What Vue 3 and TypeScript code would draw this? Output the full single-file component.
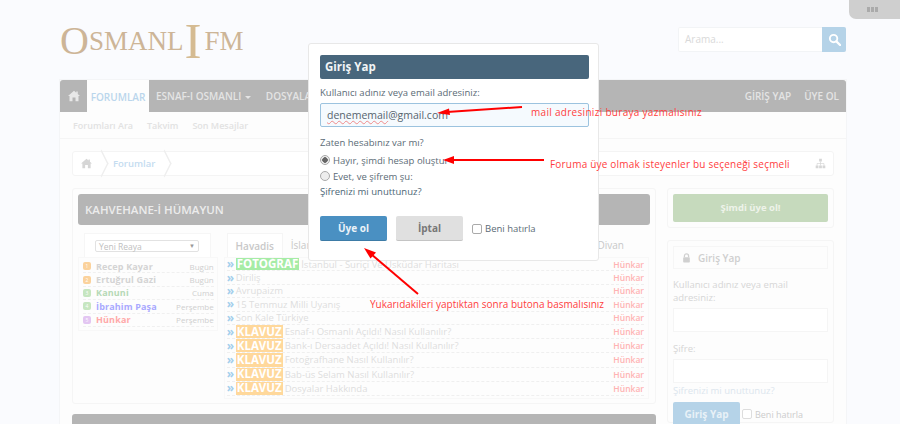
<script setup lang="ts">
const members = [
  { name: 'Recep Kayar', day: 'Bugün', color: '#d4d4d4', dot: '#fbd29c' },
  { name: 'Ertuğrul Gazi', day: 'Bugün', color: '#d4d4d4', dot: '#fbd29c' },
  { name: 'Kanuni', day: 'Cuma', color: '#b6d9b6', dot: '#c6e6c0' },
  { name: 'İbrahim Paşa', day: 'Perşembe', color: '#a9a9ff', dot: '#c6e6c0' },
  { name: 'Hünkar', day: 'Perşembe', color: '#ffa9a9', dot: '#e3c6f2' },
]

const topics = [
  { tag: 'FOTOĞRAF', title: 'İstanbul - Suriçi Ve Üsküdar Haritası' },
  { tag: '', title: 'Diriliş' },
  { tag: '', title: 'Avrupaizm' },
  { tag: '', title: '15 Temmuz Milli Uyanış' },
  { tag: '', title: 'Son Kale Türkiye' },
  { tag: 'KLAVUZ', title: 'Esnaf-ı Osmanlı Açıldı! Nasıl Kullanılır?' },
  { tag: 'KLAVUZ', title: 'Bank-ı Dersaadet Açıldı! Nasıl Kullanılır?' },
  { tag: 'KLAVUZ', title: 'Fotoğrafhane Nasıl Kullanılır?' },
  { tag: 'KLAVUZ', title: 'Bab-üs Selam Nasıl Kullanılır?' },
  { tag: 'KLAVUZ', title: 'Dosyalar Hakkında' },
]

const homePath = 'M8 1 0 8h2v7h4v-5h4v5h4V8h2L13 5.300V2h-2v1.500z'
</script>

<template>
  <div class="page">
    <div class="tab-handle"><i></i><i></i><i></i></div>

    <header class="top">
      <div class="logo">
        <span class="logo-o">O</span><span>SMANL</span><span class="logo-i">I</span><span>FM</span>
      </div>
      <div class="search">
        <span class="search-input">Arama...</span>
        <span class="search-btn">
          <svg width="13" height="13" viewBox="0 0 14 14">
            <circle cx="6" cy="6" r="4" fill="none" stroke="#fff" stroke-width="2" />
            <path d="M9 9l4 4" stroke="#fff" stroke-width="2.400" stroke-linecap="round" />
          </svg>
        </span>
      </div>
    </header>

    <div class="site">
      <nav class="nav">
        <span class="nav-home">
          <svg width="12" height="12" viewBox="0 0 16 16"><path :d="homePath" fill="#e8e8e8" /></svg>
        </span>
        <span class="nav-active">FORUMLAR</span>
        <span class="nav-link">ESNAF-I OSMANLI <b class="caret"></b></span>
        <span class="nav-link">DOSYALAR <b class="caret"></b></span>
        <span class="nav-right">GİRİŞ YAP</span>
        <span class="nav-right last">ÜYE OL</span>
      </nav>
      <div class="subnav">
        <span>Forumları Ara</span>
        <span>Takvim</span>
        <span>Son Mesajlar</span>
      </div>

      <div class="content">
        <div class="crumbs">
          <svg width="11" height="11" viewBox="0 0 16 16"><path :d="homePath" fill="#d6d6d6" /></svg>
          <span class="crumb-sep"></span>
          <span class="crumb-text">Forumlar</span>
          <span class="crumb-sep"></span>
          <svg class="sitemap" width="11" height="11" viewBox="0 0 16 16">
            <path d="M6 1h4v4H6zM1 11h4v4H1zM6 11h4v4H6zM11 11h4v4h-4z" fill="#d6d6d6" />
            <path d="M8 5v6M3 11V8h10v3" fill="none" stroke="#d6d6d6" />
          </svg>
        </div>

        <div class="columns">
          <main class="main">
            <section class="panel">
              <h2 class="panel-title">KAHVEHANE-İ HÜMAYUN</h2>
              <div class="panel-body">
                <div class="members">
                  <div class="select-tab">
                    <div class="select">Yeni Reaya <em>▼</em></div>
                  </div>
                  <ul class="member-list">
                    <li v-for="(m, index) in members" :key="m.name">
                      <i :style="{ background: m.dot }">{{ index + 1 }}</i>
                      <b :style="{ color: m.color }">{{ m.name }}</b>
                      <span>{{ m.day }}</span>
                    </li>
                  </ul>
                </div>
                <div class="topics">
                  <div class="tabs">
                    <span class="tab">Havadis</span>
                    <span class="tab-plain">İslam</span>
                    <span class="tab-end">Divan</span>
                  </div>
                  <ul class="topic-list">
                    <li v-for="(t, index) in topics" :key="t.title" :class="{ tall: index > 4 }">
                      <span class="mark">»</span>
                      <span v-if="t.tag" class="tag" :class="t.tag === 'KLAVUZ' ? 'orange' : 'green'">{{ t.tag }}</span>
                      <span class="topic-title">{{ t.title }}</span>
                      <span class="author">Hünkar</span>
                    </li>
                  </ul>
                </div>
              </div>
            </section>
            <div class="next-bar"></div>
          </main>

          <aside class="side">
            <div class="side-box">
              <div class="signup">Şimdi üye ol!</div>
            </div>
            <div class="side-box login">
              <div class="login-title">
                <svg width="9" height="10" viewBox="0 0 10 12">
                  <path d="M2.500 5V3.500a2.500 2.500 0 015 0V5" fill="none" stroke="#d0d0d0" stroke-width="1.500" />
                  <rect x="1" y="5" width="8" height="6.500" rx="1" fill="#d0d0d0" />
                </svg>
                Giriş Yap
              </div>
              <div class="login-label">Kullanıcı adınız veya email adresiniz:</div>
              <div class="login-input"></div>
              <div class="login-label pw">Şifre:</div>
              <div class="login-input"></div>
              <div class="login-forgot">Şifrenizi mi unuttunuz?</div>
              <div class="login-actions">
                <span class="login-btn">Giriş Yap</span>
                <span class="check faded"></span>
                <span class="login-remember">Beni hatırla</span>
              </div>
            </div>
          </aside>
        </div>
      </div>
    </div>

    <div class="modal">
      <h3 class="modal-title">Giriş Yap</h3>
      <div class="modal-label">Kullanıcı adınız veya email adresiniz:</div>
      <div class="modal-input"><span class="squiggle">denememail</span>@gmail.com</div>
      <div class="modal-q">Zaten hesabınız var mı?</div>
      <div class="radio-row"><span class="radio on"></span>Hayır, şimdi hesap oluştur</div>
      <div class="radio-row"><span class="radio"></span>Evet, ve şifrem şu:</div>
      <div class="modal-forgot">Şifrenizi mi unuttunuz?</div>
      <div class="modal-actions">
        <span class="btn primary">Üye ol</span>
        <span class="btn cancel">İptal</span>
        <span class="check"></span>
        <span>Beni hatırla</span>
      </div>
    </div>

    <svg class="arrows" width="900" height="424" viewBox="0 0 900 424">
      <path d="M522 107 447 112" stroke="#f00" stroke-width="2" />
      <path d="M437 113 449 108.500 450 115z" fill="#f00" />
      <path d="M544 160H452" stroke="#f00" stroke-width="2" />
      <path d="M443 160 454 156V164z" fill="#f00" />
      <path d="M418 294 371 254" stroke="#f00" stroke-width="2" />
      <path d="M364 248 376 252.500 370.500 258.500z" fill="#f00" />
    </svg>
    <span class="note note-mail">mail adresinizi buraya yazmalısınız</span>
    <span class="note note-radio">Foruma üye olmak isteyenler bu seçeneği seçmeli</span>
    <span class="note note-btn">Yukarıdakileri yaptıktan sonra butona basmalısınız</span>
  </div>
</template>

<style>
html,
body {
  margin: 0;
  overflow: hidden;
  background: #fafbfe;
}
</style>

<style scoped>
.page {
  position: relative;
  width: 900px;
  height: 424px;
  overflow: hidden;
  padding: 0 54px 0 60px;
  box-sizing: border-box;
  background: #fafbfe;
  font-family: "Open Sans", "Liberation Sans", sans-serif;
  font-size: 10px;
  color: #ddd;
}

ul {
  list-style: none;
  margin: 0;
  padding: 0;
}

.tab-handle {
  position: absolute;
  top: 0;
  right: 0;
  width: 51px;
  height: 19px;
  display: flex;
  justify-content: center;
  align-items: center;
  gap: 1px;
  padding-right: 5px;
  box-sizing: border-box;
  background: #cfcfcf;
  border-bottom-left-radius: 7px;
}

.tab-handle i {
  width: 3px;
  height: 5px;
  background: #aaa;
}

.top {
  height: 80px;
  display: flex;
  justify-content: space-between;
}

.logo {
  margin-top: 21px;
  height: 40px;
  display: flex;
  align-items: center;
  font-family: "Liberation Serif", serif;
  font-size: 27px;
  line-height: 40px;
  color: #cdb597;
  white-space: nowrap;
}

.logo-o {
  font-size: 40px;
}

.logo-i {
  font-size: 51px;
  margin: 0 3px 0 1px;
  color: #d5bb92;
}

.search {
  margin-top: 27px;
  width: 168px;
  height: 25px;
  display: flex;
  background: #fff;
  border-radius: 2px;
  box-shadow: inset 0 0 0 1px #f2f4f6;
}

.search-input {
  flex: 1;
  padding-left: 7px;
  font-size: 10px;
  line-height: 25px;
  color: #d9d9d9;
}

.search-btn {
  width: 24px;
  display: flex;
  align-items: center;
  justify-content: center;
  background: #b5d3e8;
  border-radius: 0 2px 2px 0;
}

.site {
  background: #fdfdfd;
  height: 344px;
  box-shadow: 0 0 0 1px #f4f5f7;
}

.nav {
  height: 32px;
  display: flex;
  align-items: center;
  background: #b5b5b5;
  border-radius: 3px 3px 0 0;
  font-size: 10px;
  font-weight: 600;
  color: #e4e4e4;
}

.nav-home {
  width: 27px;
  display: flex;
  justify-content: center;
}

.nav-active {
  width: 62px;
  height: 32px;
  line-height: 34px;
  text-align: center;
  background: #fdfdfd;
  color: #bad6ec;
}

.nav-link {
  margin-left: 7px;
  margin-right: 8px;
  white-space: nowrap;
}

.caret {
  display: inline-block;
  vertical-align: middle;
  border: 3px solid transparent;
  border-top-color: #e4e4e4;
  border-bottom: 0;
  margin-left: 1px;
}

.nav-right {
  margin-left: 13px;
}

.nav-right:nth-of-type(5) {
  margin-left: auto;
}

.nav-right.last {
  margin-right: 7px;
}

.subnav {
  height: 27px;
  display: flex;
  align-items: center;
  gap: 14px;
  padding-left: 13px;
  border-bottom: 1px solid #f5f5f5;
  box-sizing: border-box;
  font-size: 9px;
  font-weight: 600;
  color: #e2e2e2;
}

.content {
  padding: 12px 12px 0;
}

.crumbs {
  height: 25px;
  display: flex;
  align-items: center;
  padding: 0 7px 0 8px;
  background: #fff;
  border: 1px solid #f4f4f4;
  border-radius: 3px;
  box-sizing: border-box;
  font-size: 9.500px;
  font-weight: 600;
  color: #c4dcf0;
}

.crumb-sep {
  width: 8px;
  height: 8px;
  margin: 0 8px 0 5px;
  border-top: 1px solid #eee;
  border-right: 1px solid #eee;
  transform: scaleX(0.5) rotate(45deg) scale(2.200);
}

.crumb-text {
  margin-left: -1px;
}

.sitemap {
  margin-left: auto;
}

.columns {
  display: flex;
  margin-top: 12px;
  gap: 11px;
}

.main {
  width: 584px;
}

.panel {
  height: 216px;
  padding: 6px;
  box-sizing: border-box;
  background: #fdfdfd;
  border: 1px solid #f5f5f5;
  border-radius: 3px;
}

.panel-title {
  margin: -1px -1px 0;
  height: 31px;
  padding-left: 7px;
  background: #b5b5b5;
  border-radius: 3px;
  font-size: 11.500px;
  font-weight: 600;
  line-height: 31px;
  color: #ececec;
}

.panel-body {
  display: flex;
  padding-top: 8px;
}

.members {
  width: 140px;
  margin-left: -1px;
}

.select-tab {
  width: 127px;
  height: 24px;
  margin-left: 6px;
  padding-top: 6px;
  box-sizing: border-box;
  border: 1px solid #f6f6f6;
  border-bottom: 0;
  background: #fff;
}

.select {
  width: 104px;
  height: 12px;
  margin-left: 10px;
  padding: 0 3px;
  box-sizing: border-box;
  display: flex;
  justify-content: space-between;
  background: #fff;
  border: 1px solid #e2e2e2;
  border-radius: 2px;
  font-size: 8.500px;
  line-height: 11px;
  color: #c0c0c0;
}

.select em {
  font-style: normal;
  font-size: 6px;
  color: #999;
}

.member-list {
  padding: 2px 3px 3px 4px;
  border: 1px solid #f8f8f8;
}

.member-list li {
  height: 13.400px;
  display: flex;
  align-items: center;
  box-sizing: border-box;
  border-bottom: 1px dashed #f0f0f0;
  font-size: 9px;
}

.member-list i {
  width: 8px;
  height: 8px;
  margin-right: 5px;
  border-radius: 2px;
  font-size: 5px;
  font-style: normal;
  line-height: 8px;
  text-align: center;
  color: #fff;
}

.member-list b {
  font-weight: 700;
  letter-spacing: 0.150px;
}

.member-list span {
  margin-left: auto;
  font-size: 8px;
  color: #cfcfcf;
}

.topics {
  width: 426px;
  margin-left: 6px;
}

.tabs {
  height: 24px;
  display: flex;
  align-items: center;
  font-size: 10px;
  font-weight: 600;
  color: #c8c8c8;
}

.tab {
  width: 56px;
  height: 24px;
  line-height: 24px;
  text-align: center;
  margin-left: 3px;
  background: #fff;
  border: 1px solid #f5f5f5;
  border-bottom: 0;
  box-sizing: border-box;
}

.tab-plain {
  margin-left: 8px;
  font-weight: 400;
}

.tab-end {
  margin-left: auto;
  margin-right: 25px;
  font-weight: 400;
}

.topic-list {
  padding: 0 4px 2px 2px;
  border: 1px solid #f8f8f8;
}

.topic-list li {
  height: 13.400px;
  display: flex;
  align-items: center;
  box-sizing: border-box;
  border-bottom: 1px dashed #efefef;
  font-size: 9.500px;
  white-space: nowrap;
  overflow: hidden;
}

.topic-list li.tall {
  height: 14.200px;
}

.mark {
  width: 9px;
  font-size: 12px;
  font-weight: 700;
  line-height: 10px;
  color: #a4cfec;
}

.tag {
  padding: 0 1px;
  margin-right: 2px;
  font-size: 11.500px;
  font-weight: 700;
  line-height: 14px;
  color: #fff;
}

.tag.green {
  background: #a6eca6;
}

.tag.orange {
  background: #ffd89b;
}

.topic-title {
  color: #dedede;
  font-size: 9.500px;
}

.author {
  margin-left: auto;
  font-size: 8.500px;
  font-weight: 600;
  color: #ffb3b3;
}

.next-bar {
  height: 40px;
  margin-top: 10px;
  background: #b5b5b5;
  border-radius: 3px;
}

.side {
  width: 167px;
  display: flex;
  flex-direction: column;
  gap: 12px;
}

.side-box {
  padding: 5px 5px;
  background: #fdfdfd;
  border: 1px solid #f5f5f5;
  border-radius: 3px;
  box-sizing: border-box;
}

.signup {
  height: 28px;
  background: #c6dabd;
  border-radius: 2px;
  font-size: 9.500px;
  font-weight: 700;
  line-height: 28px;
  text-align: center;
  color: #eef3ea;
}

.login {
  height: 183px;
  font-size: 9.500px;
  color: #d6d6d6;
}

.login-title {
  height: 23px;
  display: flex;
  align-items: center;
  gap: 7px;
  padding-left: 8px;
  border: 1px solid #f6f6f6;
  box-sizing: border-box;
  font-size: 10px;
  font-weight: 600;
  color: #cfcfcf;
}

.login-label {
  margin-top: 9px;
  line-height: 13px;
}

.login-label.pw {
  margin-top: 10px;
}

.login-input {
  height: 24px;
  margin-top: 4px;
  background: #fff;
  border: 1px solid #f5f5f5;
  box-sizing: border-box;
}

.login-forgot {
  margin-top: 1px;
  line-height: 13px;
  color: #dce6ee;
}

.login-actions {
  display: flex;
  align-items: center;
  margin-top: 5px;
}

.login-btn {
  width: 67px;
  height: 24px;
  background: #b5d3e8;
  border-radius: 2px;
  font-size: 10px;
  font-weight: 700;
  line-height: 24px;
  text-align: center;
  color: #e8f1f7;
}

.login-remember {
  margin-left: 3px;
  font-size: 9px;
  color: #ccc;
}

.check {
  width: 8px;
  height: 8px;
  margin-left: 9px;
  margin-right: 3px;
  background: #fff;
  border: 1px solid #aaa;
  border-radius: 2px;
}

.check.faded {
  margin-left: 2px;
  margin-right: 0;
  border-color: #ddd;
}

.modal {
  position: absolute;
  left: 308px;
  top: 43px;
  width: 291px;
  height: 218px;
  padding: 11px 11px 0;
  box-sizing: border-box;
  background: #fff;
  border: 1px solid #e8e8e8;
  border-radius: 3px;
  font-size: 9.500px;
  color: #5b6b76;
}

.modal-title {
  margin: 0;
  width: 269px;
  height: 24px;
  padding-left: 5px;
  box-sizing: border-box;
  background: #48667c;
  border-radius: 2px;
  font-size: 11.500px;
  font-weight: 700;
  line-height: 24px;
  color: #f2f5f7;
}

.modal-label {
  margin-top: 7px;
  line-height: 13px;
}

.modal-input {
  width: 269px;
  height: 24px;
  margin-top: 4px;
  padding-left: 6px;
  box-sizing: border-box;
  background: #f5fafe;
  border: 1px solid #9cc3df;
  border-radius: 2px;
  font-size: 10.500px;
  line-height: 23px;
  color: #55646e;
}

.squiggle {
  text-decoration: underline wavy #f08a8a 1px;
}

.modal-q {
  margin-top: 9px;
  line-height: 14px;
}

.radio-row {
  display: flex;
  align-items: center;
  height: 16px;
  margin-top: 2px;
}

.radio-row + .radio-row {
  margin-top: 0;
}

.radio {
  width: 8px;
  height: 8px;
  margin-right: 3px;
  background: #eee;
  border: 1px solid #aaa;
  border-radius: 50%;
}

.radio.on {
  background: radial-gradient(circle, #666 0 2.500px, #eee 3px);
}

.modal-forgot {
  margin-top: 1px;
  line-height: 14px;
  color: #4c6676;
}

.modal-actions {
  display: flex;
  align-items: center;
  margin-top: 17px;
}

.btn {
  width: 67px;
  height: 25px;
  margin-right: 9px;
  box-sizing: border-box;
  border-radius: 2px;
  font-size: 10px;
  font-weight: 700;
  line-height: 24px;
  text-align: center;
}

.btn.primary {
  background: #4a90c2;
  border-bottom: 1px solid #3d7ba6;
  color: #eaf2f8;
}

.btn.cancel {
  background: #e0e0e0;
  border-bottom: 1px solid #c4c4c4;
  color: #777;
}

.modal-actions .check {
  margin-left: 0;
}

.arrows {
  position: absolute;
  left: 0;
  top: 0;
  pointer-events: none;
}

.note {
  position: absolute;
  font-size: 10px;
  line-height: 14px;
  color: #ff3d3d;
  white-space: nowrap;
}

.note-mail {
  left: 531px;
  top: 105px;
  letter-spacing: 0.300px;
}

.note-radio {
  left: 550px;
  top: 157px;
  letter-spacing: 0.200px;
}

.note-btn {
  left: 370px;
  top: 297px;
}
</style>
